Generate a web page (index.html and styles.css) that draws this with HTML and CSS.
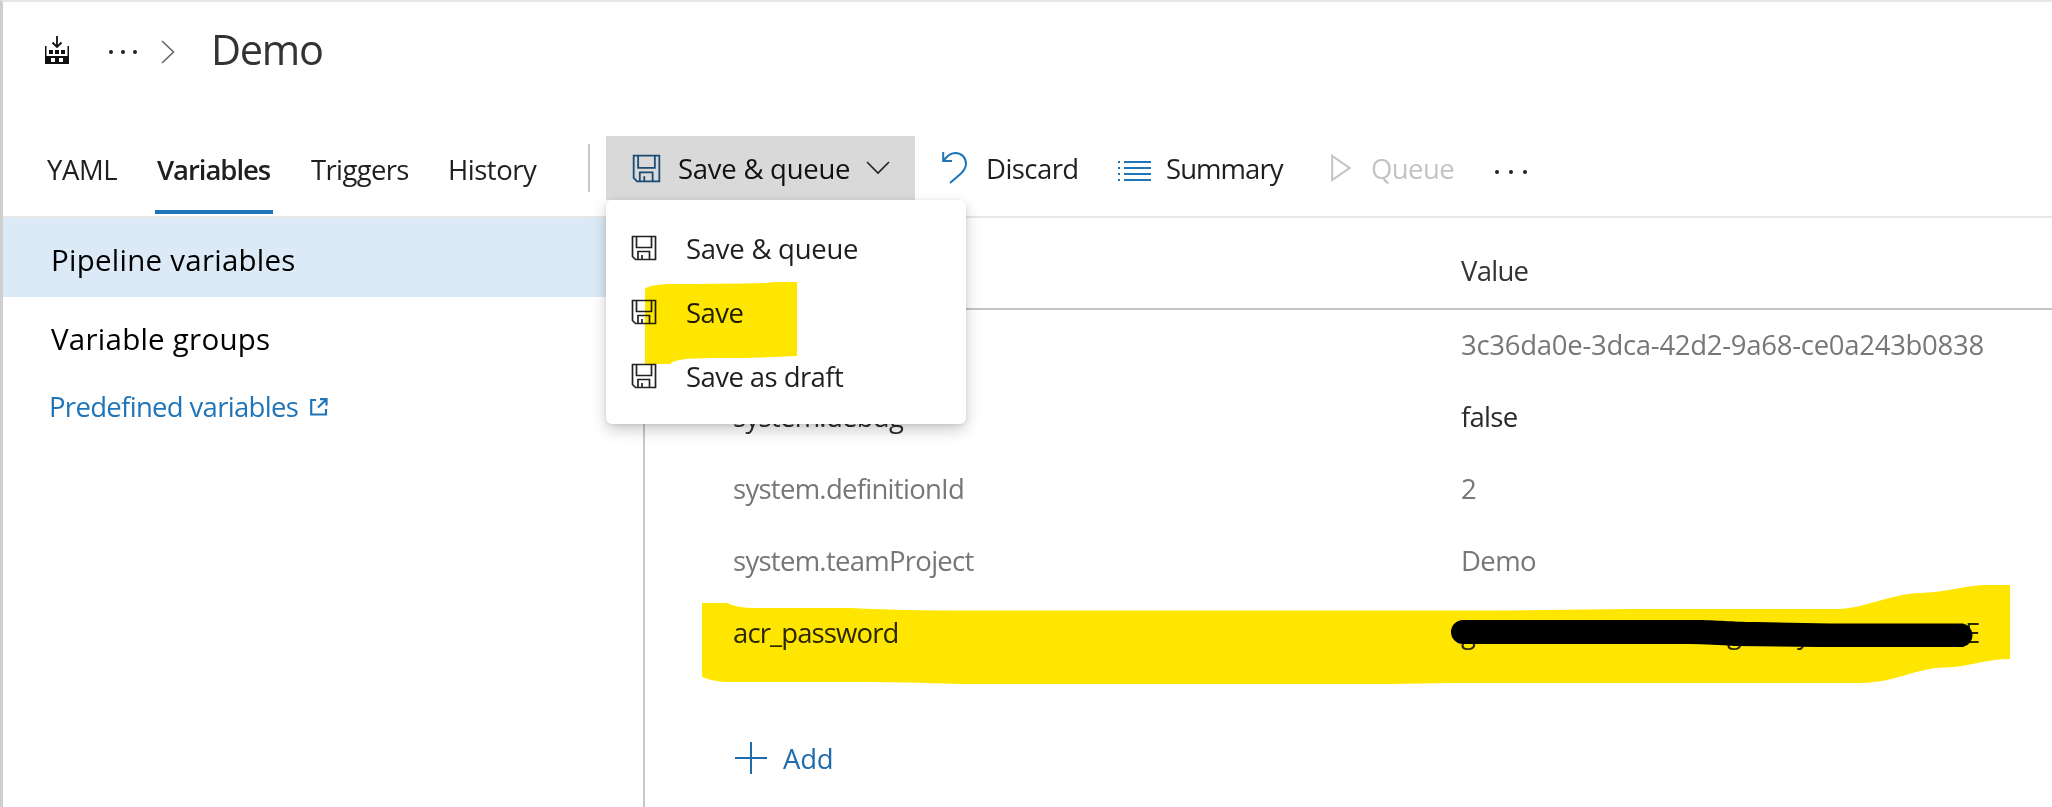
FILE: index.html
```html
<!DOCTYPE html>
<html lang="en">
<head>
<meta charset="utf-8">
<title>Demo - Variables</title>
<link rel="stylesheet" href="styles.css">
</head>
<body>
<svg class="defs" width="0" height="0">
  <symbol id="save" viewBox="0 0 26 26">
    <path d="M1.5 1.5H24.5V24.5H4.5L1.5 21.5Z M5.5 1.5V12.5H20.5V1.5 M7 24.5V16.5H18.5V24.5 M11 24.5V20"/>
  </symbol>
</svg>
<div class="page">
  <header class="crumbs">
    <svg class="build" viewBox="0 0 24 28"><path d="M0 10H1.5V20H22.5V10H24V28H0Z"/><path d="M4 14h4v4h-4zM10 14h4v4h-4zM16 14h4v4h-4z"/><path class="window" d="M6 22h4v4h-4zM14 22h4v4h-4z"/><path class="arrow" d="M12 0V11M7.5 6.5L12 11L16.5 6.5"/></svg>
    <svg class="dots" viewBox="0 0 28 4"><circle cx="2" cy="2" r="2"/><circle cx="14" cy="2" r="2"/><circle cx="26" cy="2" r="2"/></svg>
    <svg class="crumb-chevron" viewBox="0 0 14 24"><path d="M1 1L12.5 12L1 23"/></svg>
    <h1 class="title">Demo</h1>
  </header>
  <div class="bar">
    <nav class="tabs">
      <a class="tab tab-yaml">YAML</a>
      <a class="tab tab-variables">Variables</a>
      <a class="tab tab-triggers">Triggers</a>
      <a class="tab tab-history">History</a>
    </nav>
    <div class="divider"></div>
    <div class="split">
      <button class="save-button">
        <svg class="save-icon"><use href="#save"/></svg>
        <span class="label">Save &amp; queue</span>
        <svg class="caret" viewBox="0 0 24 14"><path d="M1 1L12 12L23 1"/></svg>
      </button>
      <div class="menu">
        <div class="menu-item"><svg class="menu-icon"><use href="#save"/></svg><span class="label">Save &amp; queue</span></div>
        <div class="menu-item"><svg class="menu-icon"><use href="#save"/></svg><span class="label tight">Save</span></div>
        <div class="menu-item"><svg class="menu-icon"><use href="#save"/></svg><span class="label tight">Save as draft</span></div>
        <svg class="menu-marker" viewBox="645 282 152 82"><path d="M645 289Q648 285 668 284Q720 284 765 283L775 282H797V356Q760 358 725 358Q674 357 670 364H645Z"/></svg>
      </div>
    </div>
    <div class="action discard">
      <svg class="undo" viewBox="0 0 26 32"><path d="M1.2 0V9H10M1.5 8.8Q7 1 13.500 1C20 1 24 6 24 12C24 16 22 18.500 19 21.500L8 31"/></svg>
      <span class="label">Discard</span>
    </div>
    <div class="action summary">
      <svg class="list" viewBox="0 0 33 21"><path d="M0 1H2M0 7H2M0 13H2M0 19H2M6 1H33M6 7H33M6 13H33M6 19H33"/></svg>
      <span class="label">Summary</span>
    </div>
    <div class="action queue">
      <svg class="play" viewBox="0 0 20 28"><path d="M1.2 2V26L18.500 14Z"/></svg>
      <span class="label">Queue</span>
    </div>
    <svg class="dots more" viewBox="0 0 32 4"><circle cx="2" cy="2" r="2"/><circle cx="16" cy="2" r="2"/><circle cx="30" cy="2" r="2"/></svg>
  </div>
  <div class="content">
    <aside class="side">
      <div class="side-item selected">Pipeline variables</div>
      <div class="side-item">Variable groups</div>
      <a class="predefined">Predefined variables
        <svg class="external" viewBox="0 0 18 18"><path d="M6 2H1.2V16.500H16V11M10 1.2H16.500V7.500M16.500 1.2L8 9.500"/></svg>
      </a>
    </aside>
    <main class="table">
      <div class="row head"><span></span><span>Value</span></div>
      <div class="row"><span></span><span class="guid">3c36da0e-3dca-42d2-9a68-ce0a243b0838</span></div>
      <div class="row strong"><span>system.debug</span><span>false</span></div>
      <div class="row"><span>system.definitionId</span><span>2</span></div>
      <div class="row"><span>system.teamProject</span><span class="project">Demo</span></div>
      <div class="row strong marked">
        <span class="password">acr_password</span>
        <span class="secret"><span>g</span><span>g</span><span>y</span><span>E</span></span>
        <svg class="marker" viewBox="702 585 1308 100"><path d="M702 603H727Q737 608 755 608H850Q890 610 950 610.500H1500L1630 609H1838C1862 609 1890 594 1920 593C1950 592 1965 585 1988 585H2010V659C1985 659 1970 667 1945 667.500C1915 668 1895 683 1860 683H1450L1390 684H960Q900 682 870 682H730Q714 682 702 677Z"/></svg>
        <svg class="scribble" viewBox="1450 620 526 28"><path d="M1463 620H1693C1720 620 1730 622 1755 622L1830 623.500H1963A12 12 0 0 1 1963 647H1820L1735 646C1720 645 1705 644 1690 644H1463A12 12 0 0 1 1463 620Z"/></svg>
      </div>
      <a class="add">
        <svg class="plus" viewBox="0 0 32 32"><path d="M0 16H32M16 0V32"/></svg>
        <span class="label">Add</span>
      </a>
    </main>
  </div>
</div>
</body>
</html>
```
FILE: styles.css
```css
* { box-sizing: border-box; }
body {
  margin: 0;
  background: #fff;
  color: #1f1f1f;
  font: 27.5px "Open Sans", "Noto Sans", sans-serif;
}
svg { flex: none; display: block; fill: none; stroke: none; }
.defs { position: absolute; }
.page {
  display: flex;
  flex-direction: column;
  height: 807px;
  overflow: hidden;
  border-top: 2px solid #e6e6e6;
  border-left: 3px solid #cfcfcf;
}
.label { white-space: nowrap; letter-spacing: -.25px; padding-top: 1px; }

/* Breadcrumb */
.crumbs { display: flex; align-items: center; height: 98px; padding-left: 42px; }
.build { width: 24px; height: 28px; fill: #111; margin-bottom: 2px; }
.build .window { fill: #fff; }
.build .arrow { fill: none; stroke: #111; stroke-width: 1.8; }
.dots { width: 28px; height: 4px; fill: #222; }
.crumbs .dots { margin: 2px 0 0 40px; }
.crumb-chevron { width: 14px; height: 24px; margin: 2px 0 0 24px; stroke: #666; stroke-width: 1.6; }
.title { margin: -4px 0 0 36px; font-size: 41.5px; font-weight: 400; letter-spacing: -1.3px; color: #333; }

/* Tabs and toolbar */
.bar { display: flex; height: 118px; padding-top: 36px; border-bottom: 2px solid #e8e8e8; }
.tabs { display: flex; }
.tab { height: 78px; line-height: 68px; white-space: nowrap; }
.tab-yaml { width: 72px; margin-left: 44px; letter-spacing: -.4px; }
.tab-variables { width: 118px; margin-left: 36px; padding-left: 2px; border-bottom: 4px solid #1f75b8; font-weight: 600; letter-spacing: -1.05px; }
.tab-triggers { width: 102px; margin-left: 38px; letter-spacing: -.65px; }
.tab-history { width: 88px; margin-left: 35px; letter-spacing: -.5px; }
.divider { width: 2px; height: 48px; margin: 8px 16px 0 52px; background: #c8c8c8; }
.split { position: relative; width: 309px; height: 64px; }
.save-button { display: flex; align-items: center; width: 309px; height: 64px; padding: 0 0 0 26px; border: 0; background: #d9d9d9; color: #111; font: inherit; }
.save-icon { width: 29px; height: 29px; stroke: #1b4a72; stroke-width: 1.6; margin-right: 17px; }
.caret { width: 24px; height: 14px; margin-left: 16px; stroke: #222; stroke-width: 1.6; }
.menu {
  position: absolute;
  left: 0;
  top: 64px;
  z-index: 2;
  width: 360px;
  height: 224px;
  padding-top: 16px;
  border-radius: 6px;
  background: #fff;
  box-shadow: 0 6px 15px rgba(0, 0, 0, .2), 0 1px 4px rgba(0, 0, 0, .1);
}
.menu-item { display: flex; align-items: center; height: 64px; padding-left: 25px; }
.menu-item .tight { letter-spacing: -.57px; }
.menu-icon { width: 26px; height: 26px; margin-right: 29px; stroke: #222; stroke-width: 1.7; }
.menu-marker { position: absolute; left: 39px; top: 82px; width: 152px; height: 82px; fill: #ffe600; mix-blend-mode: multiply; }
.action { display: flex; align-items: center; height: 64px; }
.undo { width: 26px; height: 32px; margin: 0 18px 0 27px; stroke: #1f75b8; stroke-width: 2; }
.discard .label { width: 94px; letter-spacing: -.56px; }
.list { width: 33px; height: 21px; margin: 6px 15px 0 38px; stroke: #1f75b8; stroke-width: 2; }
.summary .label { width: 119px; letter-spacing: -.95px; }
.play { width: 20px; height: 28px; margin: 0 20px 0 46px; stroke: #c4c4c4; stroke-width: 2; }
.queue { color: #c4c4c4; }
.queue .label { width: 83px; letter-spacing: -.6px; }
.more { width: 32px; margin: 34px 0 0 41px; }

/* Left pane */
.content { display: flex; flex: 1; }
.side { width: 642px; border-right: 2px solid #c8c8c8; color: #000; font-size: 29.5px; letter-spacing: .25px; }
.side-item { height: 79px; line-height: 84px; padding-left: 48px; }
.side-item.selected { background: #dceaf7; }
.predefined { display: flex; align-items: center; height: 61px; padding-left: 46px; color: #1f75b8; font-size: 27.5px; letter-spacing: -.68px; }
.external { width: 18px; height: 18px; margin-left: 12px; stroke: #1f75b8; stroke-width: 2.2; }

/* Variables table */
.table { flex: 1; letter-spacing: -.72px; }
.row { display: grid; grid-template-columns: 728px 1fr; height: 72px; line-height: 74px; padding-left: 88px; color: #777; }
.head { height: 92px; line-height: 106px; margin-bottom: -2px; border-bottom: 2px solid #c4c4c4; color: #333; }
.guid { letter-spacing: -.28px; }
.project { letter-spacing: -.6px; }
.strong { color: #2b2b2b; }
.marked { position: relative; }
.password { letter-spacing: -.87px; }
.secret { display: grid; grid-template-columns: 266px 70px 168px 1fr; }
.marker { position: absolute; left: 57px; top: -11px; width: 1308px; height: 100px; fill: #ffe600; mix-blend-mode: multiply; }
.scribble { position: absolute; left: 805px; top: 24px; width: 526px; height: 28px; fill: #000; }
.add { display: flex; align-items: center; width: 200px; height: 72px; margin-top: 54px; padding-left: 90px; color: #1f6cad; }
.plus { width: 32px; height: 32px; margin-right: 16px; stroke: #1f6cad; stroke-width: 2; }
```
